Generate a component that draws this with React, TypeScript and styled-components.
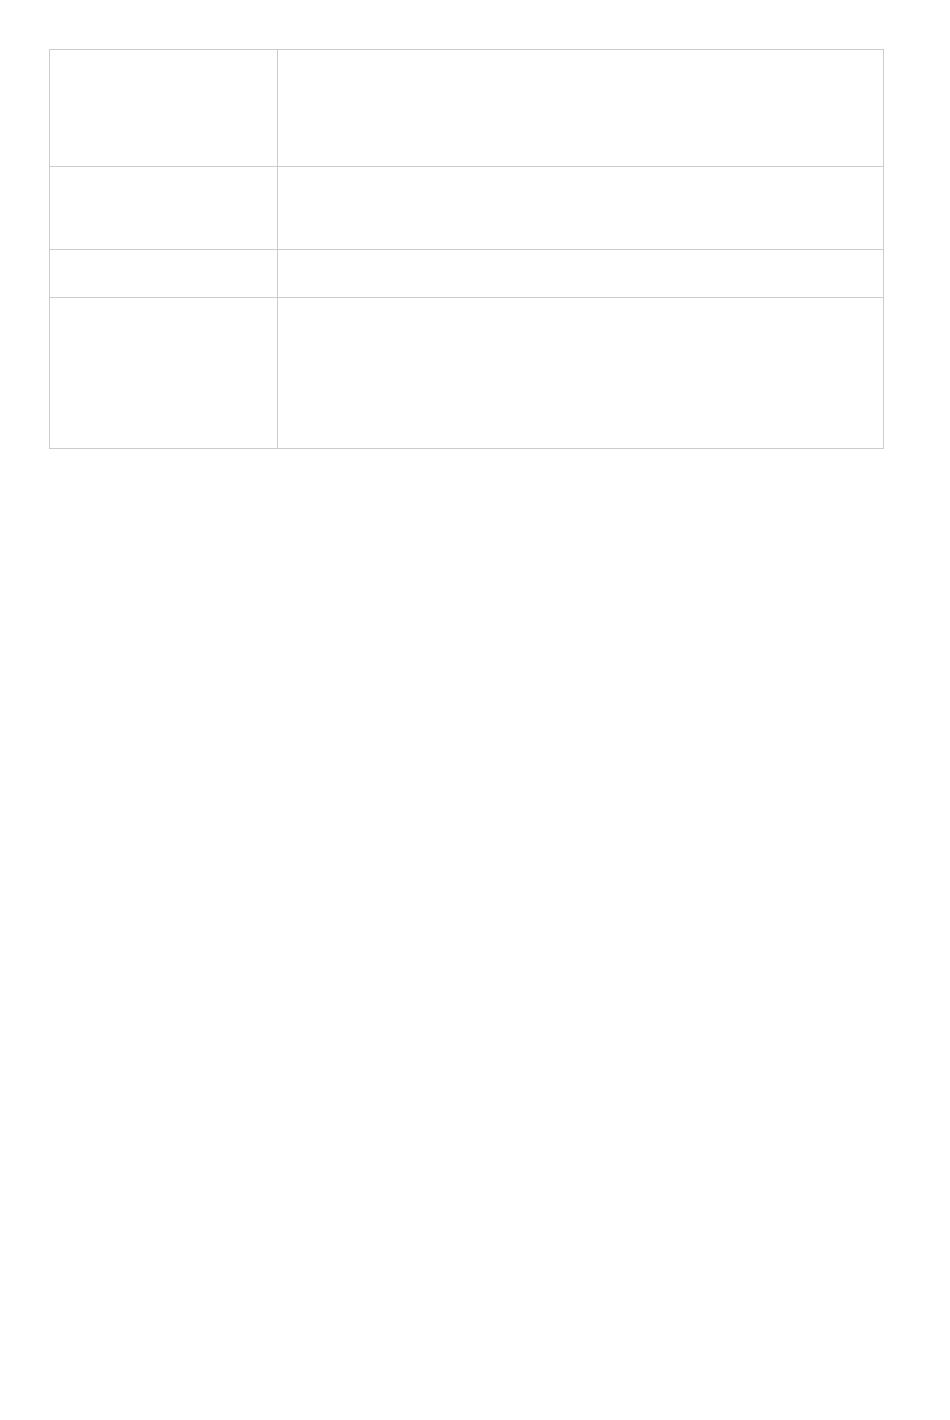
import React from "react"
import styled, { createGlobalStyle } from "styled-components"

const GlobalStyle = createGlobalStyle`
  html, body {
    margin: 0;
    padding: 0;
    background: #ffffff;
    font-family: "Liberation Sans", Arial, sans-serif;
  }
`

const Page = styled.div`
  padding: 49px 0 0 49px;
`

const Table = styled.div`
  display: grid;
  grid-template-columns: 228px 606px;
  width: 835px;
  box-sizing: border-box;
  border-top: 1px solid #cccccc;
  border-left: 1px solid #cccccc;
`

const Cell = styled.div<{ $height: number }>`
  box-sizing: border-box;
  height: ${(props) => props.$height}px;
  border-right: 1px solid #cccccc;
  border-bottom: 1px solid #cccccc;
  padding: 12px 16px;
  font-size: 14px;
  color: #333333;
`

const rows = [117, 83, 48, 151]

const App = () => {
  return (
    <Page>
      <GlobalStyle />
      <Table>
        {rows.map((height, i) => (
          <React.Fragment key={i}>
            <Cell $height={height} />
            <Cell $height={height} />
          </React.Fragment>
        ))}
      </Table>
    </Page>
  )
}

export default App
